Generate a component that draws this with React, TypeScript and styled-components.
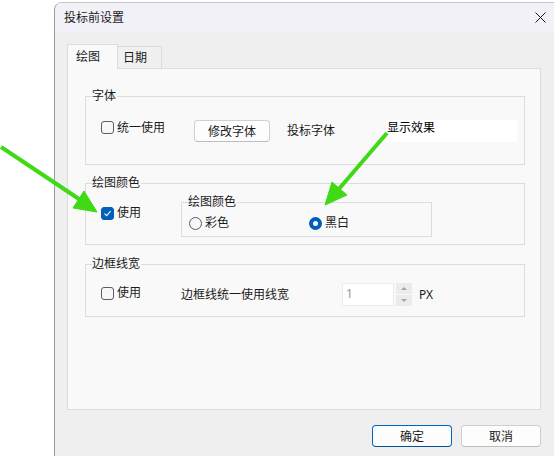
import styled, { createGlobalStyle } from "styled-components";

const GlobalStyle = createGlobalStyle`
  html, body {
    margin: 0;
    padding: 0;
    background: #ffffff;
  }
  body {
    font-family: "Noto Sans", "Noto Sans CJK SC", sans-serif;
    font-size: 12px;
    color: #1a1a1a;
  }
`;

const Page = styled.div`
  position: relative;
  width: 554px;
  height: 456px;
  padding-top: 2px;
  box-sizing: border-box;
  overflow: hidden;
`;

const Dialog = styled.div`
  margin-left: 54px;
  width: 500px;
  height: 454px;
  box-sizing: border-box;
  border-left: 1px solid #9c9c9c;
  border-top: 1px solid #c4c4c4;
  border-top-left-radius: 8px;
  overflow: hidden;
  display: flex;
  flex-direction: column;
`;

const TitleBar = styled.div`
  height: 29px;
  flex: none;
  background: #f3f1f8;
  display: flex;
  align-items: center;
  justify-content: space-between;
  padding: 0 8px 0 9px;
`;

const Title = styled.span`
  font-size: 12px;
  line-height: 16px;
`;

const Body = styled.div`
  flex: 1;
  background: #efefef;
  padding: 12px 13px 0 12px;
`;

const TabBar = styled.div`
  display: flex;
  align-items: flex-end;
  height: 24px;
`;

const Tab = styled.div<{ $active?: boolean }>`
  box-sizing: border-box;
  width: ${(p) => (p.$active ? "51px" : "44px")};
  height: ${(p) => (p.$active ? "25px" : "22px")};
  padding-left: ${(p) => (p.$active ? "8px" : "5px")};
  line-height: ${(p) => (p.$active ? "23px" : "21px")};
  background: ${(p) => (p.$active ? "#f9f9f9" : "#f0f0f0")};
  border: 1px solid #dcdcdc;
  border-bottom: none;
  ${(p) => (p.$active ? "" : "border-left: none;")}
  margin-bottom: ${(p) => (p.$active ? "-1px" : "0")};
  position: relative;
  z-index: ${(p) => (p.$active ? 1 : 0)};
`;

const Panel = styled.div`
  box-sizing: border-box;
  width: 474px;
  height: 342px;
  background: #f9f9f9;
  border: 1px solid #dcdcdc;
  padding: 19px 15px 0 17px;
`;

const Group = styled.fieldset<{ $h: number; $top?: number; $w?: number }>`
  box-sizing: border-box;
  margin: ${(p) => p.$top ?? 0}px 0 0 0;
  padding: 0;
  min-width: 0;
  border: 1px solid #dcdcdc;
  height: ${(p) => p.$h}px;
  ${(p) => (p.$w ? `width: ${p.$w}px;` : "")}
`;

const Legend = styled.legend`
  margin-left: 6px;
  padding: 0 1px 0 0;
  line-height: 16px;
  font-size: 12px;
`;

const FontRow = styled.div`
  display: grid;
  grid-template-columns: 93px 93px 99px 131px;
  align-items: center;
  height: 23px;
  padding: 15px 0 0 15px;
`;

const ColorRow = styled.div`
  display: grid;
  grid-template-columns: 80px 251px;
  align-items: start;
  padding-left: 15px;
`;

const WidthRow = styled.div`
  display: grid;
  grid-template-columns: 80px 161px auto;
  align-items: center;
  height: 23px;
  padding: 11px 0 0 15px;
`;

const CheckItem = styled.label<{ $lift?: number; $drop?: number }>`
  display: flex;
  align-items: center;
  gap: 3px;
  line-height: 16px;
  margin-bottom: ${(p) => p.$lift ?? 0}px;
  margin-top: ${(p) => p.$drop ?? 0}px;
`;

const Box = styled.span<{ $checked?: boolean }>`
  box-sizing: border-box;
  width: 13px;
  height: 13px;
  border-radius: 3px;
  border: 1px solid ${(p) => (p.$checked ? "#005fb8" : "#5c5c5c")};
  background: ${(p) => (p.$checked ? "#005fb8" : "#f7f7f7")};
  display: flex;
  align-items: center;
  justify-content: center;
`;

const Radio = styled.span<{ $checked?: boolean }>`
  box-sizing: border-box;
  width: 13px;
  height: 13px;
  border-radius: 50%;
  border: ${(p) => (p.$checked ? "4px solid #005fb8" : "1px solid #5c5c5c")};
  background: ${(p) => (p.$checked ? "#ffffff" : "#f7f7f7")};
`;

const PushButton = styled.button<{ $primary?: boolean; $w: number }>`
  box-sizing: border-box;
  width: ${(p) => p.$w}px;
  height: 22px;
  padding: 0;
  font-family: inherit;
  font-size: 12px;
  color: #1a1a1a;
  background: #fdfdfd;
  border: 1px solid ${(p) => (p.$primary ? "#0067c0" : "#d0d0d0")};
  border-bottom-color: ${(p) => (p.$primary ? "#00509a" : "#bdbdbd")};
  border-radius: 4px;
`;

const Caption = styled.span`
  line-height: 16px;
`;

const Preview = styled.div`
  box-sizing: border-box;
  width: 131px;
  height: 22px;
  background: #ffffff;
  color: #000000;
  padding: 1px 0 0 1px;
  line-height: 14px;
`;

const InnerRow = styled.div`
  display: grid;
  grid-template-columns: 120px 120px;
  padding: 5px 0 0 7px;
`;

const SpinGroup = styled.div`
  display: flex;
  align-items: center;
`;

const SpinInput = styled.div`
  box-sizing: border-box;
  width: 52px;
  height: 23px;
  background: #ffffff;
  border: 1px solid #ececec;
  color: #9a9a9a;
  padding-left: 3px;
  line-height: 20px;
`;

const SpinButtons = styled.div`
  margin-left: 2px;
  width: 16px;
  height: 23px;
  display: flex;
  flex-direction: column;
  gap: 1px;
`;

const SpinButton = styled.div<{ $down?: boolean }>`
  flex: 1;
  background: #ebebeb;
  display: flex;
  align-items: center;
  justify-content: center;
  &::after {
    content: "";
    border-left: 3px solid transparent;
    border-right: 3px solid transparent;
    ${(p) =>
      p.$down ? "border-top: 3px solid #a6a6a6;" : "border-bottom: 3px solid #a6a6a6;"}
  }
`;

const Unit = styled.span`
  margin-left: 7px;
  line-height: 16px;
`;

const Footer = styled.div`
  display: flex;
  justify-content: flex-end;
  gap: 9px;
  padding-top: 15px;
`;

const ArrowLayer = styled.svg`
  position: absolute;
  left: 0;
  top: 0;
  pointer-events: none;
`;

function Check({ checked }: { checked?: boolean }) {
  return (
    <Box $checked={checked}>
      {checked && (
        <svg width="9" height="9" viewBox="0 0 9 9">
          <path d="M1.5 4.6 L3.6 6.6 L7.6 2.2" fill="none" stroke="#ffffff" strokeWidth="1.1" />
        </svg>
      )}
    </Box>
  );
}

export default function App() {
  return (
    <>
      <GlobalStyle />
      <Page>
        <Dialog>
          <TitleBar>
            <Title>投标前设置</Title>
            <svg width="11" height="11" viewBox="0 0 11 11">
              <path d="M0.5 0.5 L10.5 10.5 M10.5 0.5 L0.5 10.5" stroke="#1a1a1a" strokeWidth="1" />
            </svg>
          </TitleBar>
          <Body>
            <TabBar>
              <Tab $active>绘图</Tab>
              <Tab>日期</Tab>
            </TabBar>
            <Panel>
              <Group $h={77}>
                <Legend>字体</Legend>
                <FontRow>
                  <CheckItem $lift={6}>
                    <Check />
                    统一使用
                  </CheckItem>
                  <PushButton $w={76}>修改字体</PushButton>
                  <Caption>投标字体</Caption>
                  <Preview>显示效果</Preview>
                </FontRow>
              </Group>

              <Group $h={70} $top={10}>
                <Legend>绘图颜色</Legend>
                <ColorRow>
                  <CheckItem $drop={14}>
                    <Check checked />
                    使用
                  </CheckItem>
                  <Group $h={43} $top={3} $w={251}>
                    <Legend>绘图颜色</Legend>
                    <InnerRow>
                      <CheckItem>
                        <Radio />
                        彩色
                      </CheckItem>
                      <CheckItem>
                        <Radio $checked />
                        黑白
                      </CheckItem>
                    </InnerRow>
                  </Group>
                </ColorRow>
              </Group>

              <Group $h={61} $top={11}>
                <Legend>边框线宽</Legend>
                <WidthRow>
                  <CheckItem $lift={3}>
                    <Check />
                    使用
                  </CheckItem>
                  <Caption>边框线统一使用线宽</Caption>
                  <SpinGroup>
                    <SpinInput>1</SpinInput>
                    <SpinButtons>
                      <SpinButton />
                      <SpinButton $down />
                    </SpinButtons>
                    <Unit>PX</Unit>
                  </SpinGroup>
                </WidthRow>
              </Group>
            </Panel>
            <Footer>
              <PushButton $primary $w={80}>
                确定
              </PushButton>
              <PushButton $w={80}>取消</PushButton>
            </Footer>
          </Body>
        </Dialog>

        <ArrowLayer width="554" height="456" viewBox="0 0 554 456">
          <g fill="#3fd916" stroke="#3fd916">
            <line x1="1" y1="147" x2="82" y2="201" strokeWidth="4" />
            <polygon points="97,212 73,208 84,191" strokeWidth="1" />
            <line x1="387" y1="133" x2="338" y2="190" strokeWidth="4" />
            <polygon points="325,205 347,195 332,182" strokeWidth="1" />
          </g>
        </ArrowLayer>
      </Page>
    </>
  );
}
